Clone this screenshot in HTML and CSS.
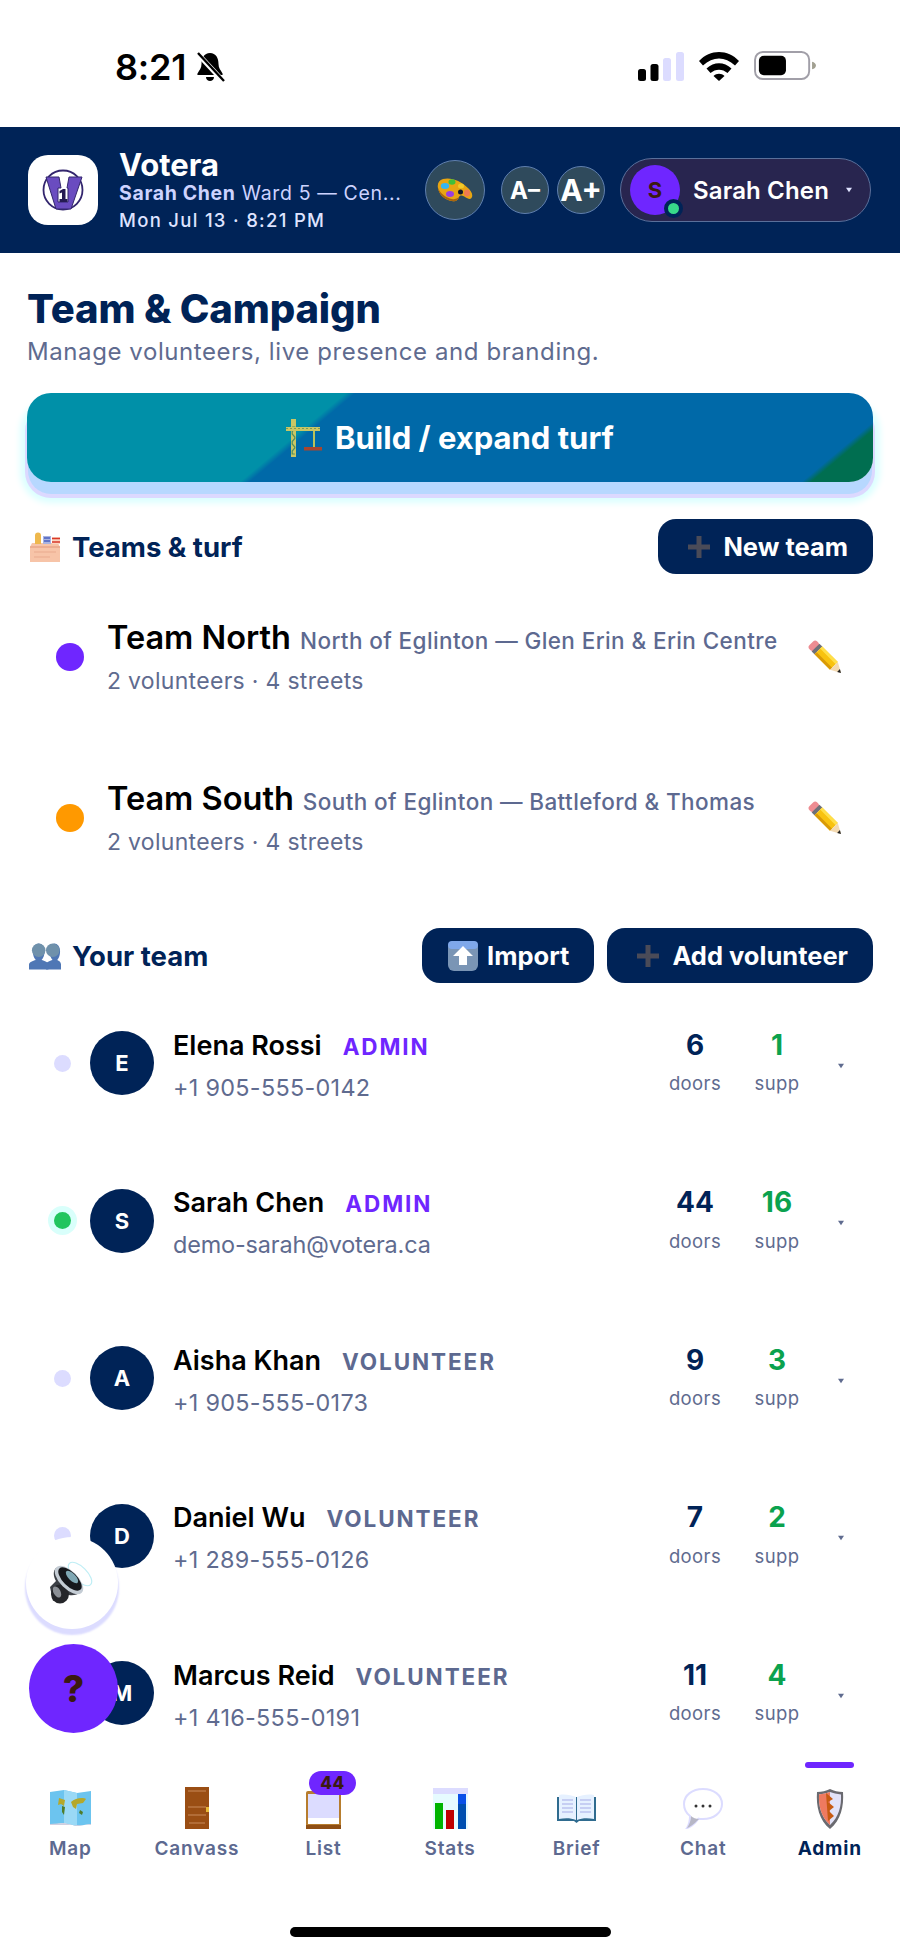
FILE: index.html
```html
<!DOCTYPE html>
<html lang="en">
<head>
<meta charset="utf-8">
<title>Votera — Team &amp; Campaign</title>
<link rel="stylesheet" href="styles.css">
</head>
<body>
<svg class="defs" width="0" height="0" aria-hidden="true">
  <symbol id="plus" viewBox="0 0 24 24"><path d="M9.500 1h5v8.500H23v5h-8.500V23h-5v-8.500H1v-5h8.500z" fill="#4a4b58"/></symbol>
  <symbol id="pencil" viewBox="0 0 36 36">
    <g transform="translate(5 5) rotate(45)">
      <rect x="-1" y="-5.500" width="7" height="11" rx="3" fill="#ee8c92"/>
      <rect x="5" y="-5.500" width="4" height="11" fill="#6f7078"/>
      <rect x="9" y="-5.500" width="22" height="11" fill="#f8c20f"/>
      <rect x="9" y="-5.500" width="22" height="3" fill="#ffdf4a"/>
      <rect x="9" y="2.500" width="22" height="3" fill="#d99a08"/>
      <path d="M31-5.500 41 0 31 5.500z" fill="#f3d9b1"/>
      <path d="M37.500-2 41 0l-3.500 2z" fill="#222"/>
    </g>
  </symbol>
  <symbol id="caret" viewBox="0 0 8 8"><path d="M0 1h8L4 7z" fill="currentColor"/></symbol>
</svg>
<div class="phone">
  <div class="status">
    <span class="time">8:21</span>
    <svg class="bell" viewBox="0 0 30 30"><path d="M15 1c6 0 8.500 5 8.500 11 0 4 2 6 4 9.500.5 1 0 1.500-1 1.500H3.500c-1 0-1.500-.5-1-1.500 2-3.500 4-5.500 4-9.500C6.500 6 9 1 15 1z" fill="#000"/><path d="M11 25h8c0 2.500-2 4-4 4s-4-1.500-4-4z" fill="#000"/><path d="M2 1 28 29" stroke="#fff" stroke-width="5"/><path d="M3 1 29 29" stroke="#000" stroke-width="2.400"/></svg>
    <div class="status-right">
      <svg class="signal" viewBox="0 0 46 29"><rect x="0" y="17" width="8" height="12" rx="2.500" fill="#000"/><rect x="12.500" y="12" width="8" height="17" rx="2.500" fill="#000"/><rect x="25" y="6" width="8" height="23" rx="2.500" fill="#dcdcff"/><rect x="38" y="0" width="8" height="29" rx="2.500" fill="#dcdcff"/></svg>
      <svg class="wifi" viewBox="0 0 40 30"><path d="M0 10C11-2 29-2 40 10l-4 4.500C26 5 14 5 4 14.500z" fill="#000"/><path d="M7.500 17.500c7.500-7 17.500-7 25 0l-4 4.500c-5-4.500-12-4.500-17 0z" fill="#000"/><path d="M14.500 25c3-3 8-3 11 0L20 30z" fill="#000"/></svg>
      <svg class="battery" viewBox="0 0 64 30"><rect x="1" y="1" width="56" height="28" rx="8" fill="#fff" stroke="#a19fa8" stroke-width="2"/><rect x="5" y="5" width="28" height="20" rx="5" fill="#000"/><path d="M60 11c2.500.5 4 2 4 4s-1.500 3.500-4 4z" fill="#a19f90"/></svg>
    </div>
  </div>

  <header class="topbar">
    <div class="logo">
      <svg viewBox="0 0 70 70">
        <circle cx="35" cy="35" r="19.500" fill="#fff" stroke="#33266e" stroke-width="1.800"/>
        <path d="M18 22h13l2 11h-3v14h10V33h-1l2-11h13L43 54H28z" fill="#6a4cc0" stroke="#33266e" stroke-width="1"/>
        <path d="M31.500 36l3.500-2h2.500v10h2v3h-8v-3h2.500v-6.500l-2.500 1z" fill="#241a52"/>
      </svg>
    </div>
    <div class="brand">
      <div class="brand-name">Votera</div>
      <div class="brand-sub"><b>Sarah Chen</b> Ward 5 — Cen...</div>
      <div class="brand-date">Mon Jul 13 · 8:21 PM</div>
    </div>
    <div class="top-actions">
      <button class="round palette">
        <svg viewBox="0 0 36 24"><path d="M6 1C14-1 24 3 31 10c3 3 5 6 4 9-1 3-4 2-7 0-3-2-5-2-6 0-1 3-3 5-7 4C8 22 2 17 1 10 0 6 2 2 6 1z" fill="#e8a512"/><path d="M1 10c1 7 7 12 14 13 4 1 6-1 7-4 0 0-3 3-7 2C9 20 3 15 1 10z" fill="#a9650e"/><ellipse cx="8" cy="8" rx="4.200" ry="3" fill="#35b6f0"/><ellipse cx="15" cy="4" rx="3.500" ry="2.800" fill="#3fbf3a"/><ellipse cx="24" cy="8" rx="3" ry="2.500" fill="#f0c92a"/><ellipse cx="13" cy="16" rx="4" ry="3" fill="#9a3de0"/><circle cx="23.500" cy="14" r="2.500" fill="#12182a"/><ellipse cx="30" cy="15" rx="3" ry="3.500" fill="#f07a50"/></svg>
      </button>
      <button class="round font">A–</button>
      <button class="round font big">A+</button>
      <button class="user-pill">
        <span class="user-avatar">S<i class="online"></i></span>
        <span class="user-name">Sarah Chen</span>
        <svg class="user-caret"><use href="#caret"/></svg>
      </button>
    </div>
  </header>

  <main class="content">
    <h1 class="title">Team &amp; Campaign</h1>
    <p class="subtitle">Manage volunteers, live presence and branding.</p>
    <button class="cta">
      <svg class="crane" viewBox="0 0 36 38"><path d="M5 0h5v38H5z" fill="#c9c664"/><path d="M6.200 8h2.600v1.500l-2.600 3V15l2.600 3v1.500l-2.600 3v2.500l2.600 3v1l-2.600 3v3h2.600" fill="none" stroke="#4f8f62" stroke-width="1.200"/><path d="M0 8h34v4H0z" fill="#c9c664"/><path d="M0 9.500h34" stroke="#7d9a55" stroke-width="1" stroke-dasharray="2 2"/><path d="M27 12h2v16h-2z" fill="#b9c25a"/><path d="M18 28h18v3.500H18z" fill="#a8452f"/></svg>
      <span>Build / expand turf</span>
    </button>

    <section class="section-head first">
      <h2 class="section-title">
        <svg class="sec-icon" viewBox="0 0 32 30"><path d="M3 11h26l2 4v15H1V15z" fill="#f7c4a8"/><path d="M1 15h30" stroke="#e8a68a" stroke-width="1.500"/><path d="M5 20h22M5 25h16" stroke="#eeb297" stroke-width="1.500"/><path d="M6 3h6v9H6z" fill="#eeb84d"/><circle cx="9" cy="3.500" r="3" fill="#eeb84d"/><path d="M14 4h8v8h-8z" fill="#a9b3e0"/><path d="M15 6h6M15 9h6" stroke="#4a62c0" stroke-width="1.500"/><path d="M23 5h8v7h-8z" fill="#fbd5c0"/><path d="M23 6.500h8M23 10h8" stroke="#d8382a" stroke-width="1.500"/></svg>
        Teams &amp; turf
      </h2>
      <div class="head-actions">
        <button class="btn"><svg class="btn-plus"><use href="#plus"/></svg>New team</button>
      </div>
    </section>

    <article class="team-row">
      <span class="team-dot north"></span>
      <div class="team-body">
        <div class="team-line"><span class="team-name">Team North</span><span class="team-desc">North of Eglinton — Glen Erin &amp; Erin Centre</span></div>
        <div class="team-meta">2 volunteers · 4 streets</div>
      </div>
      <svg class="pencil"><use href="#pencil"/></svg>
    </article>
    <article class="team-row">
      <span class="team-dot south"></span>
      <div class="team-body">
        <div class="team-line"><span class="team-name">Team South</span><span class="team-desc">South of Eglinton — Battleford &amp; Thomas</span></div>
        <div class="team-meta">2 volunteers · 4 streets</div>
      </div>
      <svg class="pencil"><use href="#pencil"/></svg>
    </article>

    <section class="section-head second">
      <h2 class="section-title">
        <svg class="sec-icon" viewBox="0 0 33 28"><path d="M17 28v-5c0-3 4-4 7-5-2-2-3-5-3-9 0-5 2-8 5-8s6 3 6 8c0 4-1 7-3 9 2 1 4 2 4 5v5z" transform="translate(1 0) scale(.97 1)" fill="#4f77b5"/><circle cx="24.500" cy="8" r="7" fill="#6f91ab"/><path d="M0 28v-5c0-3 4-4 7-5-2-2-3-5-3-9 0-5 3-8 6-8s6 3 6 8c0 4-1 7-3 9 3 1 7 2 7 5v5z" fill="#4f77b5"/><circle cx="10" cy="8" r="7" fill="#6f91ab"/></svg>
        Your team
      </h2>
      <div class="head-actions">
        <button class="btn"><svg class="btn-up" viewBox="0 0 30 30"><rect width="30" height="30" rx="6" fill="#7a95b5"/><rect y="0" width="30" height="8" rx="4" fill="#7fa8ea"/><path d="M15 5l10 10h-6v9h-8v-9H5z" fill="#fff"/></svg>Import</button>
        <button class="btn"><svg class="btn-plus"><use href="#plus"/></svg>Add volunteer</button>
      </div>
    </section>

    <article class="member">
      <span class="presence"></span>
      <span class="avatar">E</span>
      <div class="member-body">
        <div class="member-line"><span class="member-name">Elena Rossi</span><span class="role admin">ADMIN</span></div>
        <div class="member-contact">+1 905-555-0142</div>
      </div>
      <div class="stat"><b class="num">6</b><span class="lbl">doors</span></div>
      <div class="stat"><b class="num good">1</b><span class="lbl">supp</span></div>
      <svg class="row-caret"><use href="#caret"/></svg>
    </article>
    <article class="member">
      <span class="presence live"></span>
      <span class="avatar">S</span>
      <div class="member-body">
        <div class="member-line"><span class="member-name">Sarah Chen</span><span class="role admin">ADMIN</span></div>
        <div class="member-contact email">demo-sarah@votera.ca</div>
      </div>
      <div class="stat"><b class="num">44</b><span class="lbl">doors</span></div>
      <div class="stat"><b class="num good">16</b><span class="lbl">supp</span></div>
      <svg class="row-caret"><use href="#caret"/></svg>
    </article>
    <article class="member">
      <span class="presence"></span>
      <span class="avatar">A</span>
      <div class="member-body">
        <div class="member-line"><span class="member-name">Aisha Khan</span><span class="role">VOLUNTEER</span></div>
        <div class="member-contact">+1 905-555-0173</div>
      </div>
      <div class="stat"><b class="num">9</b><span class="lbl">doors</span></div>
      <div class="stat"><b class="num good">3</b><span class="lbl">supp</span></div>
      <svg class="row-caret"><use href="#caret"/></svg>
    </article>
    <article class="member">
      <span class="presence"></span>
      <span class="avatar">D</span>
      <div class="member-body">
        <div class="member-line"><span class="member-name">Daniel Wu</span><span class="role">VOLUNTEER</span></div>
        <div class="member-contact">+1 289-555-0126</div>
      </div>
      <div class="stat"><b class="num">7</b><span class="lbl">doors</span></div>
      <div class="stat"><b class="num good">2</b><span class="lbl">supp</span></div>
      <svg class="row-caret"><use href="#caret"/></svg>
    </article>
    <article class="member">
      <span class="presence"></span>
      <span class="avatar">M</span>
      <div class="member-body">
        <div class="member-line"><span class="member-name">Marcus Reid</span><span class="role">VOLUNTEER</span></div>
        <div class="member-contact">+1 416-555-0191</div>
      </div>
      <div class="stat"><b class="num">11</b><span class="lbl">doors</span></div>
      <div class="stat"><b class="num good">4</b><span class="lbl">supp</span></div>
      <svg class="row-caret"><use href="#caret"/></svg>
    </article>
  </main>

  <button class="float-sound">
    <svg viewBox="0 0 44 44">
      <ellipse cx="30" cy="13" rx="7" ry="15" transform="rotate(-45 30 13)" fill="none" stroke="#bfeef5" stroke-width="1.200"/>
      <path d="M6 7 L31 31 C26 35 20 35 16 33 L3 40 L0 26 L6 20 C3 15 3 10 6 7z" fill="#3c3f45"/>
      <ellipse cx="10" cy="33" rx="9" ry="9.500" fill="#25262a"/>
      <ellipse cx="7" cy="31" rx="3.500" ry="6" transform="rotate(-30 7 31)" fill="#8c9096"/>
      <ellipse cx="19" cy="19" rx="9" ry="18" transform="rotate(-45 19 19)" fill="#c4ccd4"/>
      <ellipse cx="20" cy="18" rx="7" ry="15" transform="rotate(-45 20 18)" fill="#16181c"/>
      <ellipse cx="22" cy="16" rx="3.500" ry="8" transform="rotate(-45 22 16)" fill="#7fa8b4"/>
    </svg>
  </button>
  <button class="float-help">?</button>

  <nav class="tabbar">
    <div class="tabs">
      <div class="tab"><span class="tab-icon"><svg class="ic-map" viewBox="0 0 41 36"><path d="M0 2 14 0l13 3L41 1v33l-14 2-13-3-14 2z" fill="#6cc4ef"/><path d="M14 0l13 3v33l-13-3z" fill="#9ad9f6"/><path d="M9 8l6 2-1 6-3-2-3 1zM21 12c4-4 12-5 15-3l-3 4-6 1-1 5-3-2z" fill="#b5a82b"/><path d="M12 16l3 1-1 8-2-3zM30 20l3 2-1 3-3-2z" fill="#4f7d2a"/><path d="M0 34l14-1 13 3 14-2v1H0z" fill="#cfcfe0"/></svg></span><span class="tab-label">Map</span></div>
      <div class="tab"><span class="tab-icon"><svg class="ic-door" viewBox="0 0 24 42"><rect width="24" height="42" fill="#9a4e14"/><path d="M3 4h18M3 20h18M3 28h18M4 36h16" stroke="#c98a5a" stroke-width="1"/><rect x="21" y="20" width="3" height="5" fill="#e6b93a"/></svg></span><span class="tab-label">Canvass</span></div>
      <div class="tab"><span class="tab-icon"><svg class="ic-clip" viewBox="0 0 35 38"><rect x="0" y="0" width="35" height="38" rx="2" fill="#b77d2e"/><rect x="2" y="3" width="31" height="30" fill="#fff"/><rect x="2" y="3" width="31" height="24" fill="#dcdcff"/><rect x="0" y="34" width="35" height="4" fill="#8f4f14"/></svg><span class="badge">44</span></span><span class="tab-label">List</span></div>
      <div class="tab"><span class="tab-icon"><svg class="ic-stats" viewBox="0 0 35 41"><rect width="35" height="41" fill="#e6fbff"/><rect y="0" width="35" height="6" fill="#dcdcff"/><rect x="2" y="15" width="8" height="26" fill="#00b400"/><rect x="13" y="22" width="8" height="19" fill="#c00000"/><rect x="25" y="6" width="8" height="35" fill="#004fb0"/><rect x="25" y="6" width="8" height="10" fill="#0a50e8"/></svg></span><span class="tab-label">Stats</span></div>
      <div class="tab"><span class="tab-icon"><svg class="ic-book" viewBox="0 0 39 29"><path d="M0 3h39v24H22l-2.500 2-2.500-2H0z" fill="#2f6b8f"/><path d="M2 1c6-1 12 0 17 2v23c-5-2-11-2-17-1zM37 1c-6-1-12 0-17 2v23c5-2 11-2 17-1z" fill="#e6f1ff"/><path d="M5 6h11M5 10h11M5 14h11M5 18h11M23 6h11M23 10h11M23 14h11M23 18h11" stroke="#bcc2ef" stroke-width="1.500"/></svg></span><span class="tab-label">Brief</span></div>
      <div class="tab"><span class="tab-icon"><svg class="ic-chat" viewBox="0 0 40 41"><path d="M20 1c10.500 0 19 6 19 15s-8.500 15-19 15c-1.500 0-3 0-4.500-.3C13 34 8 39 4 40c2-3 3-7 3-12C3 25 1 21 1 16 1 7 9.500 1 20 1z" fill="#fff" stroke="#dcdcff" stroke-width="2"/><path d="M8 28c2 2 5 3 8 3-3 3-8 8-12 9 2-3 4-7 4-12z" fill="#b7b7c6"/><circle cx="13" cy="18" r="1.500" fill="#333"/><circle cx="20" cy="18" r="1.500" fill="#333"/><circle cx="27" cy="18" r="1.500" fill="#333"/></svg></span><span class="tab-label">Chat</span></div>
      <div class="tab active"><i class="tab-marker"></i><span class="tab-icon"><svg class="ic-shield" viewBox="0 0 28 41"><path d="M14 1c4 2 8 3 13 3 1 14-2 28-13 37C3 32 0 18 1 4c5 0 9-1 13-3z" fill="#6a6a70"/><path d="M14 4c3 1 7 2 11 2.500C25.500 18 23 29 14 37 5 29 2.500 18 3 6.500 7 6 11 5 14 4z" fill="#e2e2f8"/><path d="M3 6.500C7 6 11 5 14 4v33C5 29 2.500 18 3 6.500z" fill="#ef7a60"/><path d="M10 5l7 6-5 3 6 5-5 4 5 5-6 5z" fill="#c75a12"/></svg></span><span class="tab-label">Admin</span></div>
    </div>
    <div class="home-bar"></div>
  </nav>
</div>
</body>
</html>
```

FILE: styles.css
```css
* { box-sizing: border-box; }
html, body { margin: 0; padding: 0; background: #fff; }
body { font-family: Inter, "Liberation Sans", sans-serif; color: #000; }
button { font-family: inherit; border: 0; padding: 0; margin: 0; }
h1, h2, p { margin: 0; }
.defs { position: absolute; }

.phone { position: relative; width: 900px; height: 1955px; display: flex; flex-direction: column; overflow: hidden; background: #fff; }

/* status bar */
.status { height: 127px; flex: none; display: flex; align-items: flex-start; padding: 45px 82px 0 115px; }
.time { font-size: 36px; line-height: 44px; font-weight: 600; letter-spacing: -0.2px; }
.bell { width: 30px; height: 30px; margin: 7px 0 0 9px; }
.status-right { margin-left: auto; display: flex; align-items: flex-start; padding-top: 7px; }
.signal { width: 46px; height: 29px; }
.wifi { width: 40px; height: 30px; margin: -1px 0 0 15px; }
.battery { width: 62px; height: 29px; margin: -1px 2px 0 15px; }

/* header */
.topbar { height: 126px; flex: none; background: #002357; display: flex; align-items: center; padding: 0 29px 0 28px; }
.logo { width: 70px; height: 70px; border-radius: 20px; background: #fff; flex: none; }
.logo svg { width: 70px; height: 70px; display: block; }
.brand { margin-left: 21px; color: #fff; }
.brand-name { font-size: 31px; line-height: 33px; font-weight: 700; }
.brand-sub { font-size: 19.500px; line-height: 24px; color: #cdd3ff; letter-spacing: .65px; margin-top: 0; }
.brand-sub b { font-weight: 700; }
.brand-date { font-size: 18.500px; line-height: 24px; font-weight: 500; color: #dfe3ff; letter-spacing: 1.300px; margin-top: 3px; }
.top-actions { margin-left: auto; display: flex; align-items: center; }
.round { border-radius: 50%; background: #2f4a5c; border: 1.500px solid #5f7fae; color: #fff; display: flex; align-items: center; justify-content: center; flex: none; }
.palette { width: 60px; height: 60px; margin-right: 16px; }
.palette svg { width: 36px; height: 24px; }
.font { width: 48px; height: 48px; font-size: 24px; font-weight: 700; margin-right: 8px; }
.font.big { font-size: 30px; margin-right: 15px; }
.user-pill { width: 251px; height: 64px; border-radius: 32px; background: #28254f; border: 1.500px solid #5a6f9a; color: #fff; display: flex; align-items: center; padding-left: 9px; flex: none; }
.user-avatar { position: relative; width: 50px; height: 50px; border-radius: 50%; background: #6f26ff; color: #3b1a10; font-size: 22px; font-weight: 700; display: flex; align-items: center; justify-content: center; flex: none; }
.online { position: absolute; right: -3px; bottom: -3px; width: 19px; height: 19px; border-radius: 50%; background: #38d98a; border: 4px solid #002357; }
.user-name { font-size: 24px; font-weight: 600; margin-left: 13px; letter-spacing: .15px; }
.user-caret { width: 6px; height: 6px; margin-left: 17px; color: #dfe3ff; }

/* content */
.content { flex: 1; min-height: 0; overflow: hidden; padding: 34px 27px 0; }
.title { font-size: 40px; line-height: 44px; font-weight: 800; color: #002357; letter-spacing: -0.15px; }
.subtitle { font-size: 24px; line-height: 30px; color: #5f6b8f; margin-top: 6px; letter-spacing: .58px; }
.cta { display: flex; width: 846px; height: 89px; margin-top: 26px; border-radius: 24px; align-items: center; justify-content: center; color: #fff; font-size: 31px; font-weight: 700;
  background: linear-gradient(140deg, #0090a8 33.500%, #0069a8 34.500%, #0069a8 92.500%, #006e50 93.500%);
  box-shadow: 0 13px 0 -1px #b7d8ff, 0 14px 0 2px #dcd9ff, 0 14px 6px 7px #dcffff; }
.crane { width: 36px; height: 38px; margin-right: 13px; }

.section-head { display: flex; align-items: center; justify-content: space-between; height: 55px; }
.section-head.first { margin-top: 37px; }
.section-head.second { margin-top: 29.500px; }
.section-title { display: flex; align-items: center; font-size: 27.500px; font-weight: 700; color: #002357; margin-left: 2px; }
.sec-icon { width: 32px; height: 30px; margin-right: 11px; }
.head-actions { display: flex; gap: 13px; }
.btn { display: flex; align-items: center; height: 55px; padding: 0 25px; border-radius: 18px; background: #002357; color: #fff; font-size: 25.500px; font-weight: 700; }
.btn-plus { width: 24px; height: 24px; margin: 0 12px 0 4px; }
.btn-up { width: 30px; height: 30px; margin: 0 9px 0 1px; }

/* teams */
.team-row { display: flex; align-items: center; height: 161px; }
.section-head + .team-row { margin-top: 2.500px; }
.team-dot { width: 28px; height: 28px; border-radius: 50%; margin-left: 29px; flex: none; }
.team-dot.north { background: #6f26ff; }
.team-dot.south { background: #ff9900; }
.team-body { flex: 1; margin-left: 23px; }
.team-line { display: flex; align-items: baseline; }
.team-name { font-size: 32.500px; line-height: 38px; font-weight: 600; }
.team-desc { font-size: 22.500px; font-weight: 500; color: #5d6990; margin-left: 9px; letter-spacing: .4px; }
.team-meta { font-size: 23px; line-height: 28px; color: #5f6b8f; margin-top: 10px; letter-spacing: .3px; }
.pencil { width: 36px; height: 36px; flex: none; margin-right: 30px; }

/* members */
.member { display: flex; align-items: center; height: 157.500px; position: relative; }
.section-head + .member { margin-top: 1.250px; }
.presence { width: 17px; height: 17px; border-radius: 50%; background: #dcdcff; margin-left: 27px; flex: none; }
.presence.live { background: #22c55e; box-shadow: 0 0 0 6px #d9fffb; }
.avatar { width: 64px; height: 64px; border-radius: 50%; background: #002357; color: #fff; font-size: 22px; font-weight: 700; display: flex; align-items: center; justify-content: center; margin-left: 19px; flex: none; }
.member-body { flex: 1; margin: 5px 0 0 19px; min-width: 0; }
.member-line { display: flex; align-items: baseline; }
.member-name { font-size: 27px; line-height: 32px; font-weight: 600; }
.role { font-size: 22.500px; font-weight: 700; letter-spacing: 1.900px; color: #5d6990; margin-left: 21px; }
.role.admin { color: #6f26ff; }
.member-contact { font-size: 23.400px; line-height: 28px; color: #5f6b8f; margin-top: 12px; letter-spacing: .3px; }
.member-contact.email { letter-spacing: -.13px; }
.stat { width: 82px; display: flex; flex-direction: column; align-items: center; flex: none; margin-top: -3.500px; }
.num { font-size: 28px; line-height: 34px; font-weight: 700; color: #002357; }
.num.good { color: #0ba24e; }
.lbl { font-size: 18.500px; line-height: 24px; color: #5f6b8f; margin-top: 9.500px; letter-spacing: .4px; }
.row-caret { width: 6px; height: 6px; flex: none; color: #5f6b8f; margin: 5px 29px 0 20px; }

/* floating */
.float-sound { position: absolute; left: 26px; top: 1537px; width: 92px; height: 92px; border-radius: 50%; background: #fff; box-shadow: 0 5px 2px 1px #dcdcff; display: flex; align-items: center; justify-content: center; }
.float-sound svg { width: 44px; height: 44px; }
.float-help { position: absolute; left: 29px; top: 1644px; width: 89px; height: 89px; border-radius: 50%; background: #6f26ff; color: #3b1a10; font-size: 37px; font-weight: 800; display: flex; align-items: center; justify-content: center; }

/* tab bar */
.tabbar { height: 200px; flex: none; display: flex; flex-direction: column; background: #fff; position: relative; }
.tabs { display: flex; padding: 0 7px; }
.tab { flex: 1; display: flex; flex-direction: column; align-items: center; padding-top: 32px; position: relative; }
.tab-icon { height: 42px; display: flex; align-items: flex-end; justify-content: center; position: relative; }
.tab-label { font-size: 19px; line-height: 24px; font-weight: 600; color: #5d6990; letter-spacing: .8px; margin-top: 8px; }
.tab.active .tab-label { color: #002357; font-weight: 700; }
.tab-marker { position: absolute; top: 7px; left: 50%; margin-left: -25px; width: 49px; height: 6px; border-radius: 3px; background: #6f26ff; }
.ic-map { width: 41px; height: 36px; margin-bottom: 3px; }
.ic-door { width: 24px; height: 42px; }
.ic-clip { width: 35px; height: 38px; }
.ic-stats { width: 35px; height: 41px; }
.ic-book { width: 39px; height: 29px; margin-bottom: 6px; }
.ic-chat { width: 40px; height: 41px; }
.ic-shield { width: 28px; height: 41px; }
.badge { position: absolute; left: 3px; top: -16px; width: 47px; height: 24px; border-radius: 12px; background: #6f26ff; color: #3b1a10; font-size: 17px; line-height: 24px; font-weight: 800; text-align: center; letter-spacing: .5px; }
.home-bar { width: 321px; height: 10px; border-radius: 5px; background: #000; margin: 66px auto 0; }
```
